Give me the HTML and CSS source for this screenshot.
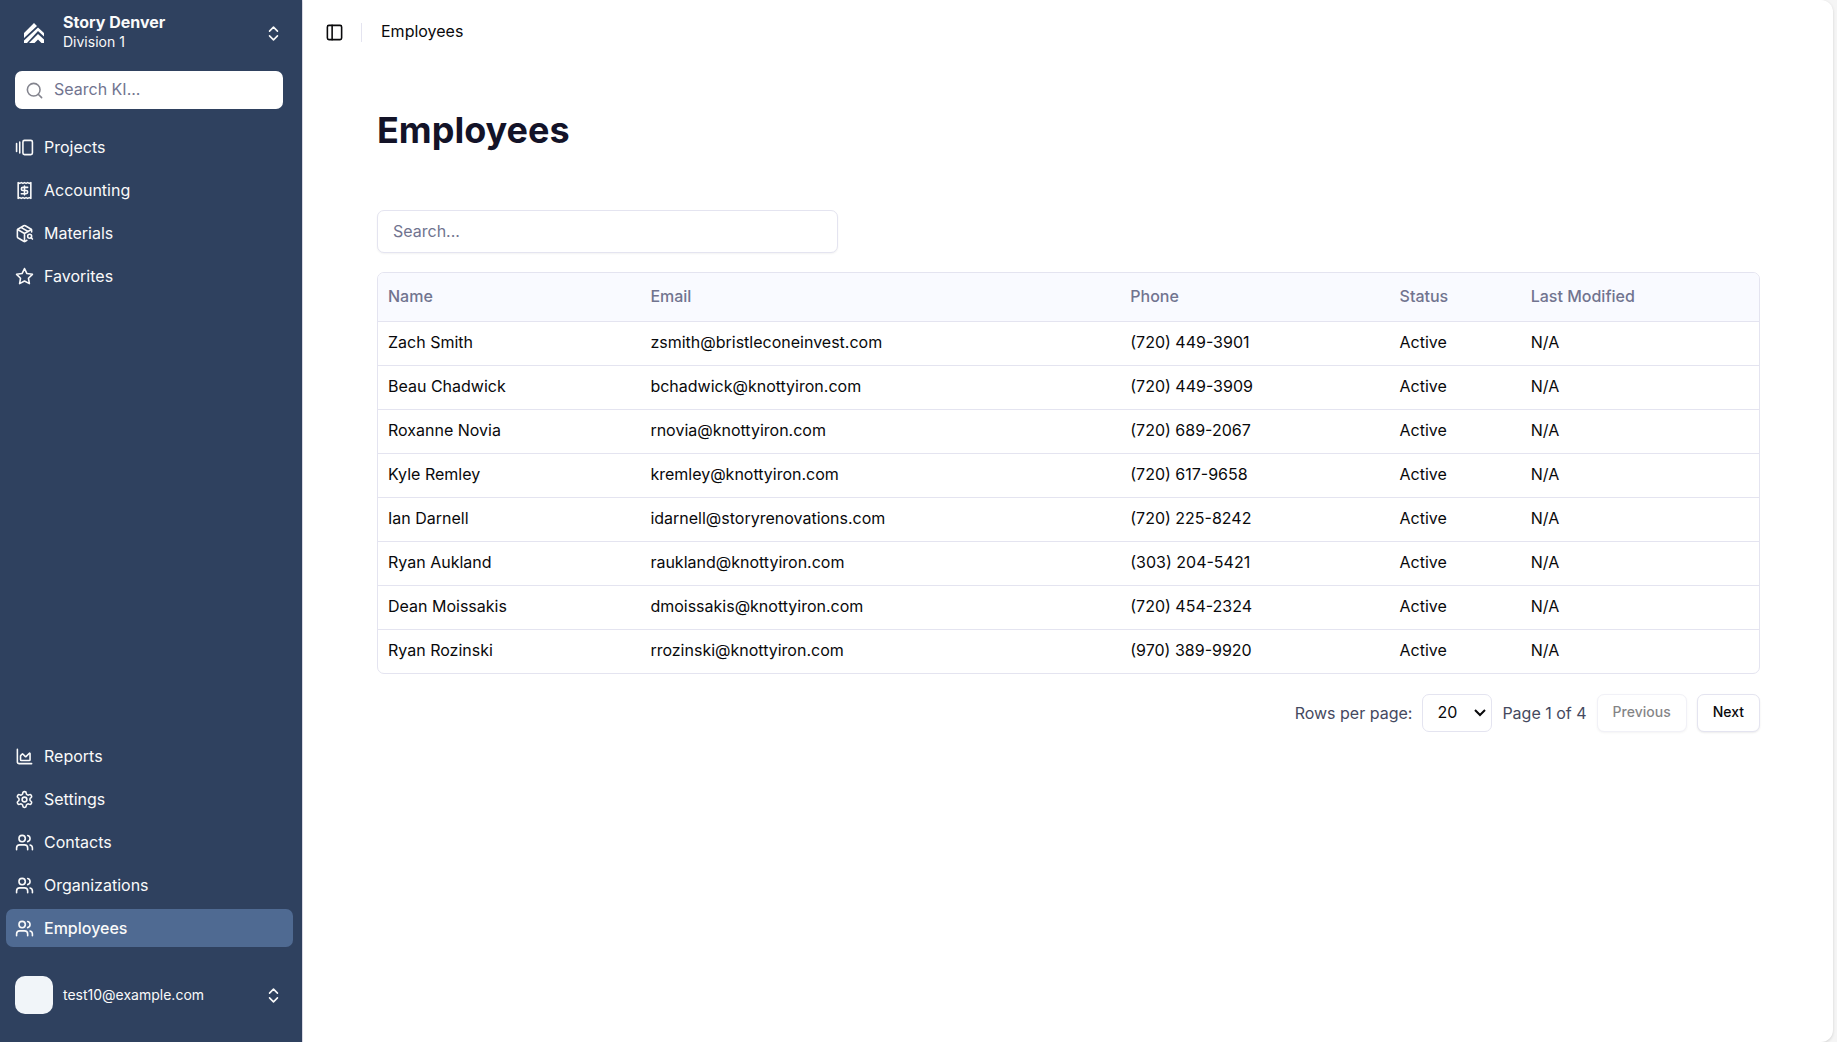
FILE: index.html
```html
<!DOCTYPE html>
<html lang="en">
<head>
<meta charset="utf-8">
<title>Employees</title>
<link rel="stylesheet" href="styles.css">
</head>
<body>
<svg class="sprite" aria-hidden="true">
  <symbol id="chevrons" viewBox="0 0 24 24"><path d="m7 15 5 5 5-5M7 9l5-5 5 5"/></symbol>
  <symbol id="users" viewBox="0 0 24 24"><path d="M16 21v-2a4 4 0 0 0-4-4H6a4 4 0 0 0-4 4v2"/><circle cx="9" cy="7" r="4"/><path d="M22 21v-2a4 4 0 0 0-3-3.870M16 3.130a4 4 0 0 1 0 7.750"/></symbol>
</svg>
<div class="app">
  <aside class="sidebar">
    <button class="switcher" type="button">
      <span class="logo">
        <svg viewBox="0 0 20 20" width="20" height="20"><path d="M0 10 10 0l3 3L0 15zM0 17.500 14 4.500 20 10v3.500l-6-5.500L3 20H0zM5 20l9-9 6 5.500V20h-2.500L14 16.500 10.500 20z"/></svg>
      </span>
      <span class="switcher-text"><strong>Story Denver</strong><span>Division 1</span></span>
      <svg class="icon"><use href="#chevrons"/></svg>
    </button>
    <label class="side-search">
      <svg class="icon" viewBox="0 0 24 24"><circle cx="11" cy="11" r="8"/><path d="m21 21-4.300-4.300"/></svg>
      <input type="text" placeholder="Search KI..." aria-label="Search KI">
    </label>
    <nav class="nav">
      <a href="#"><svg class="icon" viewBox="0 0 24 24"><path d="M2 7v10M6 5v14"/><rect width="12" height="18" x="10" y="3" rx="2"/></svg>Projects</a>
      <a href="#"><svg class="icon" viewBox="0 0 24 24"><path d="M4 2v20l2-1 2 1 2-1 2 1 2-1 2 1 2-1 2 1V2l-2 1-2-1-2 1-2-1-2 1-2-1-2 1Z"/><path d="M16 8h-6a2 2 0 1 0 0 4h4a2 2 0 1 1 0 4H8M12 17.500v-11"/></svg>Accounting</a>
      <a href="#"><svg class="icon" viewBox="0 0 24 24"><path d="M21 10V8a2 2 0 0 0-1-1.730l-7-4a2 2 0 0 0-2 0l-7 4A2 2 0 0 0 3 8v8a2 2 0 0 0 1 1.730l7 4a2 2 0 0 0 2 0l2-1.140M7.500 4.270l9 5.150"/><path d="M3.290 7 12 12l8.710-5M12 22V12"/><circle cx="18.500" cy="15.500" r="2.500"/><path d="M20.270 17.270 22 19"/></svg>Materials</a>
      <a href="#"><svg class="icon" viewBox="0 0 24 24"><path d="m12 2 3.090 6.260L22 9.270l-5 4.870 1.180 6.880L12 17.770l-6.180 3.250L7 14.140 2 9.270l6.910-1.010z"/></svg>Favorites</a>
    </nav>
    <nav class="nav nav-bottom">
      <a href="#"><svg class="icon" viewBox="0 0 24 24"><path d="M3 3v16a2 2 0 0 0 2 2h16"/><path d="M7 11.207a.5.5 0 0 1 .146-.353l2-2a.5.5 0 0 1 .708 0l3.292 3.292a.5.5 0 0 0 .708 0l4.292-4.292a.5.5 0 0 1 .854.353V16a1 1 0 0 1-1 1H8a1 1 0 0 1-1-1z"/></svg>Reports</a>
      <a href="#"><svg class="icon" viewBox="0 0 24 24"><path d="M12.220 2h-.44a2 2 0 0 0-2 2v.18a2 2 0 0 1-1 1.730l-.43.25a2 2 0 0 1-2 0l-.15-.08a2 2 0 0 0-2.730.73l-.22.38a2 2 0 0 0 .73 2.730l.15.1a2 2 0 0 1 1 1.720v.51a2 2 0 0 1-1 1.740l-.15.09a2 2 0 0 0-.73 2.730l.22.38a2 2 0 0 0 2.730.73l.15-.08a2 2 0 0 1 2 0l.43.25a2 2 0 0 1 1 1.730V20a2 2 0 0 0 2 2h.44a2 2 0 0 0 2-2v-.18a2 2 0 0 1 1-1.730l.43-.25a2 2 0 0 1 2 0l.15.08a2 2 0 0 0 2.730-.73l.22-.39a2 2 0 0 0-.73-2.730l-.15-.08a2 2 0 0 1-1-1.740v-.5a2 2 0 0 1 1-1.740l.15-.09a2 2 0 0 0 .73-2.730l-.22-.38a2 2 0 0 0-2.730-.73l-.15.08a2 2 0 0 1-2 0l-.43-.25a2 2 0 0 1-1-1.730V4a2 2 0 0 0-2-2z"/><circle cx="12" cy="12" r="3"/></svg>Settings</a>
      <a href="#"><svg class="icon"><use href="#users"/></svg>Contacts</a>
      <a href="#"><svg class="icon"><use href="#users"/></svg>Organizations</a>
      <a href="#" class="active" aria-current="page"><svg class="icon"><use href="#users"/></svg>Employees</a>
    </nav>
    <button class="account" type="button">
      <span class="avatar"></span>
      <span class="account-name">test10@example.com</span>
      <svg class="icon"><use href="#chevrons"/></svg>
    </button>
  </aside>
  <main class="main">
    <header class="topbar">
      <button class="toggle" type="button" aria-label="Toggle sidebar"><svg class="icon" viewBox="0 0 24 24"><rect width="18" height="18" x="3" y="3" rx="2"/><path d="M9 3v18"/></svg></button>
      <span class="divider"></span>
      <span class="crumb">Employees</span>
    </header>
    <section class="content">
      <h1>Employees</h1>
      <input class="search" type="text" placeholder="Search..." aria-label="Search employees">
      <div class="table-wrap">
        <table>
          <colgroup><col class="c-name"><col class="c-email"><col class="c-phone"><col class="c-status"><col></colgroup>
          <thead><tr><th>Name</th><th>Email</th><th>Phone</th><th>Status</th><th>Last Modified</th></tr></thead>
          <tbody>
            <tr><td>Zach Smith</td><td>zsmith@bristleconeinvest.com</td><td>(720) 449-3901</td><td>Active</td><td>N/A</td></tr>
            <tr><td>Beau Chadwick</td><td>bchadwick@knottyiron.com</td><td>(720) 449-3909</td><td>Active</td><td>N/A</td></tr>
            <tr><td>Roxanne Novia</td><td>rnovia@knottyiron.com</td><td>(720) 689-2067</td><td>Active</td><td>N/A</td></tr>
            <tr><td>Kyle Remley</td><td>kremley@knottyiron.com</td><td>(720) 617-9658</td><td>Active</td><td>N/A</td></tr>
            <tr><td>Ian Darnell</td><td>idarnell@storyrenovations.com</td><td>(720) 225-8242</td><td>Active</td><td>N/A</td></tr>
            <tr><td>Ryan Aukland</td><td>raukland@knottyiron.com</td><td>(303) 204-5421</td><td>Active</td><td>N/A</td></tr>
            <tr><td>Dean Moissakis</td><td>dmoissakis@knottyiron.com</td><td>(720) 454-2324</td><td>Active</td><td>N/A</td></tr>
            <tr><td>Ryan Rozinski</td><td>rrozinski@knottyiron.com</td><td>(970) 389-9920</td><td>Active</td><td>N/A</td></tr>
          </tbody>
        </table>
      </div>
      <footer class="pager">
        <label for="rows">Rows per page:</label>
        <span class="select">
          <select id="rows"><option>10</option><option selected>20</option><option>50</option></select>
          <svg viewBox="0 0 12 8" width="12" height="8" aria-hidden="true"><path d="m1 1 5 5 5-5"/></svg>
        </span>
        <span>Page 1 of 4</span>
        <button type="button" disabled>Previous</button>
        <button type="button">Next</button>
      </footer>
    </section>
  </main>
</div>
</body>
</html>
```

FILE: styles.css
```css
* { box-sizing: border-box; }

body {
  margin: 0;
  background: #f5f5f5;
  color: #09090b;
  font: 16px/24px Inter, "Liberation Sans", sans-serif;
}

button, input, select { font: inherit; color: inherit; }
button { border: 0; background: none; cursor: pointer; }
input::placeholder { color: #71748f; opacity: 1; }

.sprite { display: none; }

.icon {
  flex: none;
  width: 19px;
  height: 19px;
  fill: none;
  stroke: currentColor;
  stroke-width: 2;
  stroke-linecap: round;
  stroke-linejoin: round;
}

.app { display: flex; min-height: 100vh; padding-right: 4px; }

/* Sidebar */
.sidebar {
  display: flex;
  flex-direction: column;
  flex: none;
  width: 303px;
  padding-bottom: 18px;
  background: #2f415f;
  border-right: 1px solid #e4e4f0;
  color: #fafafa;
}

.switcher, .account {
  display: flex;
  align-items: center;
  gap: 10px;
  padding: 0 19px 0 15px;
  text-align: left;
}
.switcher { height: 66px; }
.logo { display: grid; place-items: center; width: 38px; }
.logo svg { fill: #fff; }
.switcher-text, .account-name { flex: 1; font-size: 14px; line-height: 18px; }
.switcher-text { padding-bottom: 4px; }
.switcher-text strong, .switcher-text span { display: block; }
.switcher-text strong { font-size: 16px; line-height: 22px; font-weight: 700; }

.side-search {
  display: flex;
  align-items: center;
  gap: 10px;
  height: 38px;
  margin: 5px 19px 0 15px;
  padding: 0 10px;
  border-radius: 7px;
  background: #fff;
  color: #83848e;
}
.side-search input { flex: 1; min-width: 0; padding: 0 0 2px; border: 0; outline: 0; background: none; }

.nav { display: flex; flex-direction: column; gap: 5px; padding: 19px 9px 0 6px; }
.nav a {
  display: flex;
  align-items: center;
  gap: 10px;
  height: 38px;
  padding: 0 9px;
  border-radius: 7px;
  color: inherit;
  text-decoration: none;
}
.nav .active { background: #4f6a92; font-weight: 500; }
.nav-bottom { margin-top: auto; }
.account { height: 58px; margin-top: 19px; }
.avatar { width: 38px; height: 38px; border-radius: 10px; background: #f1f5f9; }

/* Main panel */
.main {
  flex: 1;
  min-width: 0;
  border-radius: 0 12px 12px 0;
  background: #fff;
  box-shadow: 0 1px 3px rgb(0 0 0 / 15%);
}

.topbar { display: flex; align-items: center; height: 64px; padding: 0 19px; }
.toggle { display: flex; padding: 3px; }
.divider { width: 1px; height: 19px; margin: 0 19px 0 14px; background: #e4e4f0; }
.crumb { padding-bottom: 2px; }

.content { padding: 42px 73px 48px 74px; }

h1 { margin: 0 0 56px; color: #131328; font-size: 36px; line-height: 48px; font-weight: 700; }

.search {
  display: block;
  width: 461px;
  max-width: 100%;
  height: 43px;
  padding: 0 15px 2px;
  border: 1px solid #e4e4f0;
  border-radius: 7px;
  background: #fff;
  box-shadow: 0 1px 2px rgb(0 0 0 / 5%);
}

.table-wrap { margin-top: 19px; overflow: hidden; border: 1px solid #e4e4f0; border-radius: 7px; }

table { width: 100%; table-layout: fixed; border-collapse: collapse; }
th, td { padding: 0 10px 2px; text-align: left; }
th { height: 48px; background: #f9faff; color: #71748f; font-weight: 500; }
td { height: 44px; border-top: 1px solid #e4e4f0; }
.c-name { width: 19%; }
.c-email { width: 34.750%; }
.c-phone { width: 19.500%; }
.c-status { width: 9.500%; }

.pager {
  display: flex;
  align-items: center;
  justify-content: flex-end;
  gap: 10px;
  margin-top: 20px;
  color: #454960;
}
.pager select, .pager button {
  height: 38px;
  border: 1px solid #e4e4f0;
  border-radius: 7px;
  background: #fff;
  color: #09090b;
}
.select { display: grid; align-items: center; }
.select select, .select svg { grid-area: 1 / 1; }
.select select { appearance: none; width: 70px; padding: 0 0 2px 14px; }
.select svg {
  justify-self: end;
  margin-right: 6px;
  fill: none;
  stroke: #09090b;
  stroke-width: 2;
  pointer-events: none;
}
.pager button { padding: 0 15px 2px; font-size: 14px; font-weight: 500; box-shadow: 0 1px 2px rgb(0 0 0 / 8%); }
.pager button:disabled { opacity: 0.5; }
```
